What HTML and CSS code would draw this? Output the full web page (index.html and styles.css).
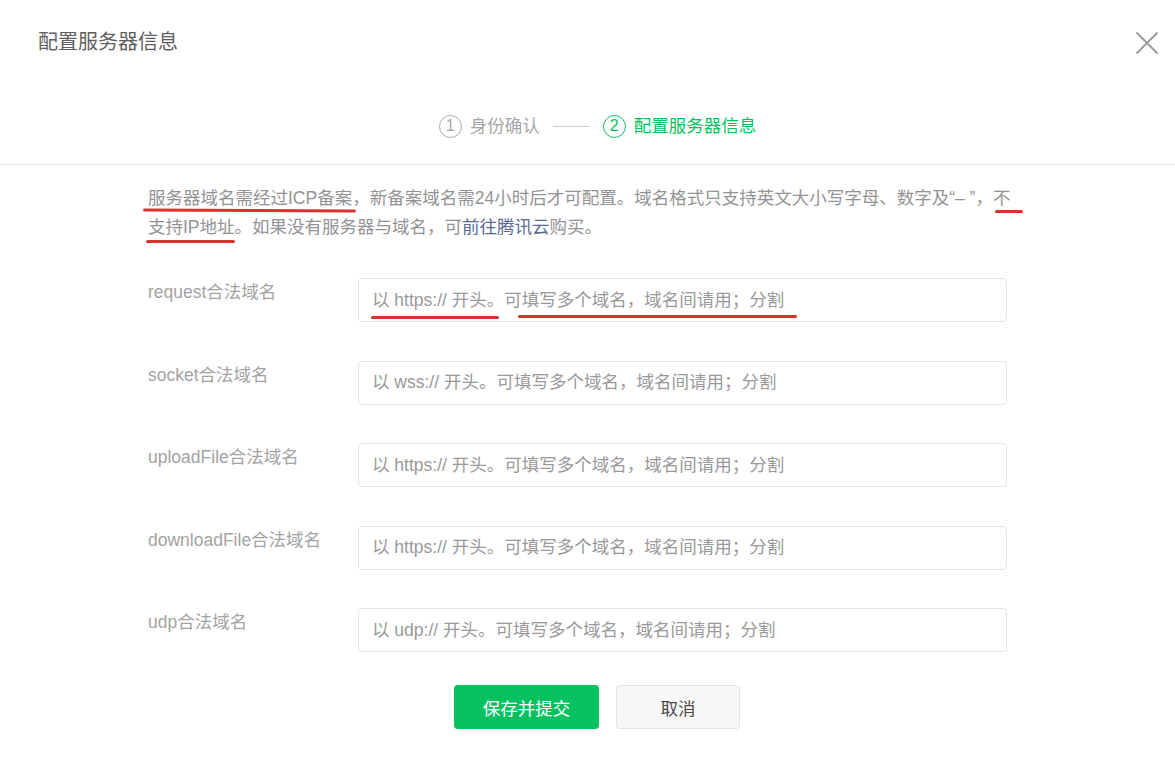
FILE: index.html
```html
<!DOCTYPE html>
<html lang="zh-CN">
<head>
<meta charset="utf-8">
<title>配置服务器信息</title>
<link rel="stylesheet" href="styles.css">
</head>
<body>
<div class="dialog">
  <div class="dlg-head">
    <h1 class="dlg-title">配置服务器信息</h1>
    <button class="close" aria-label="关闭">
      <svg width="24" height="24" viewBox="0 0 24 24"><path d="M1.5 1.5 L22.5 22.5 M22.5 1.5 L1.5 22.5" stroke="#9a9a9a" stroke-width="1.8" fill="none"/></svg>
    </button>
  </div>
  <div class="steps">
    <div class="step done"><span class="num">1</span><span class="step-text">身份确认</span></div>
    <span class="step-line"></span>
    <div class="step active"><span class="num">2</span><span class="step-text">配置服务器信息</span></div>
  </div>
  <div class="dlg-body">
    <p class="tips"><span class="mark mark-a">服务器域名需经过ICP备案</span>，新备案域名需24小时后才可配置。域名格式只支持英文大小写字母、数字及“– ”，<span class="mark mark-b">不</span><br><span class="mark mark-c">支持IP地址</span>。如果没有服务器与域名，可<a class="link" href="#">前往腾讯云</a>购买。</p>
    <div class="form">
      <div class="row">
        <label class="label">request合法域名</label>
        <div class="field">
          <input class="input" type="text" placeholder="以 https:// 开头。可填写多个域名，域名间请用；分割">
          <span class="ink ink-d"></span>
          <span class="ink ink-e"></span>
        </div>
      </div>
      <div class="row">
        <label class="label">socket合法域名</label>
        <div class="field"><input class="input" type="text" placeholder="以 wss:// 开头。可填写多个域名，域名间请用；分割"></div>
      </div>
      <div class="row">
        <label class="label">uploadFile合法域名</label>
        <div class="field"><input class="input" type="text" placeholder="以 https:// 开头。可填写多个域名，域名间请用；分割"></div>
      </div>
      <div class="row">
        <label class="label">downloadFile合法域名</label>
        <div class="field"><input class="input" type="text" placeholder="以 https:// 开头。可填写多个域名，域名间请用；分割"></div>
      </div>
      <div class="row">
        <label class="label">udp合法域名</label>
        <div class="field"><input class="input" type="text" placeholder="以 udp:// 开头。可填写多个域名，域名间请用；分割"></div>
      </div>
    </div>
    <div class="actions">
      <button class="btn btn-primary">保存并提交</button>
      <button class="btn btn-default">取消</button>
    </div>
  </div>
</div>
</body>
</html>
```
FILE: styles.css
```css
* { box-sizing: border-box; }
html, body { margin: 0; padding: 0; background: #fff; }
body {
  font-family: "Liberation Sans", "Noto Sans CJK SC", sans-serif;
  color: #929292;
  font-size: 17.5px;
}
.dialog { width: 1175px; min-height: 757px; }

.dlg-head {
  display: flex;
  align-items: flex-start;
  justify-content: space-between;
  padding: 30px 16px 0 38px;
}
.dlg-title {
  margin: 0;
  font-size: 20px;
  line-height: 24px;
  font-weight: normal;
  color: #5e5e5e;
}
.close {
  border: 0;
  background: none;
  padding: 0;
  margin-top: 1px;
  width: 24px;
  height: 24px;
  cursor: pointer;
}
.close svg { display: block; }

.steps {
  display: flex;
  align-items: center;
  justify-content: center;
  padding: 59px 0 26px 20px;
  border-bottom: 1px solid #e7e7e7;
}
.step { display: flex; align-items: center; }
.num {
  width: 23px;
  height: 23px;
  border: 1px solid #aaa;
  border-radius: 50%;
  display: flex;
  align-items: center;
  justify-content: center;
  font-size: 16px;
  line-height: 1;
  color: #a6a6a6;
  margin-right: 8px;
}
.step-text { font-size: 17.5px; line-height: 24px; color: #a6a6a6; }
.step.active .num { border-color: #07c160; color: #07c160; }
.step.active .step-text { color: #07c160; }
.step-line {
  width: 37px;
  height: 1px;
  background: #cfcfcf;
  margin: 0 13px;
}

.dlg-body { padding: 19px 0 0 148px; }
.tips {
  margin: 0;
  font-size: 17.5px;
  line-height: 29px;
  color: #939393;
  white-space: nowrap;
}
.link { color: #576b95; text-decoration: none; }
.mark { position: relative; }
.mark::after {
  content: "";
  position: absolute;
  height: 3px;
  background: #d8312e;
  border-radius: 2px;
}
.mark-a::after { left: -5px; right: -4px; bottom: -4px; transform: rotate(0.3deg); }
.mark-b::after { left: 2px; right: -13px; bottom: -5px; }
.mark-c::after { left: -2px; right: 0; bottom: -6px; }

.form { margin-top: 36px; }
.row {
  display: flex;
  align-items: flex-start;
  margin-bottom: 38.5px;
}
.row:last-child { margin-bottom: 0; }
.label {
  width: 210px;
  flex: none;
  font-size: 17.5px;
  line-height: 28px;
  color: #a3a3a3;
}
.field { position: relative; width: 649px; }
.input {
  display: block;
  width: 100%;
  height: 44px;
  border: 1px solid #e4e4e4;
  border-radius: 4px;
  padding: 0 13px;
  font-family: inherit;
  font-size: 17.5px;
  color: #353535;
  outline: none;
  background: #fff;
}
.input::placeholder { color: #999; }
.ink {
  position: absolute;
  height: 3px;
  background: #d8312e;
  border-radius: 2px;
}
.ink-d { left: 13px; width: 128px; top: 38px; }
.ink-e { left: 160px; width: 279px; top: 37px; }

.actions {
  display: flex;
  gap: 17px;
  margin-top: 33px;
  padding-left: 306px;
}
.btn {
  height: 44px;
  border-radius: 4px;
  font-family: inherit;
  font-size: 17.5px;
  cursor: pointer;
}
.btn-primary {
  width: 145px;
  border: 0;
  background: #07c160;
  color: #fff;
}
.btn-default {
  width: 124px;
  border: 1px solid #e2e2e2;
  background: #f7f7f7;
  color: #4a4a4a;
}
```
